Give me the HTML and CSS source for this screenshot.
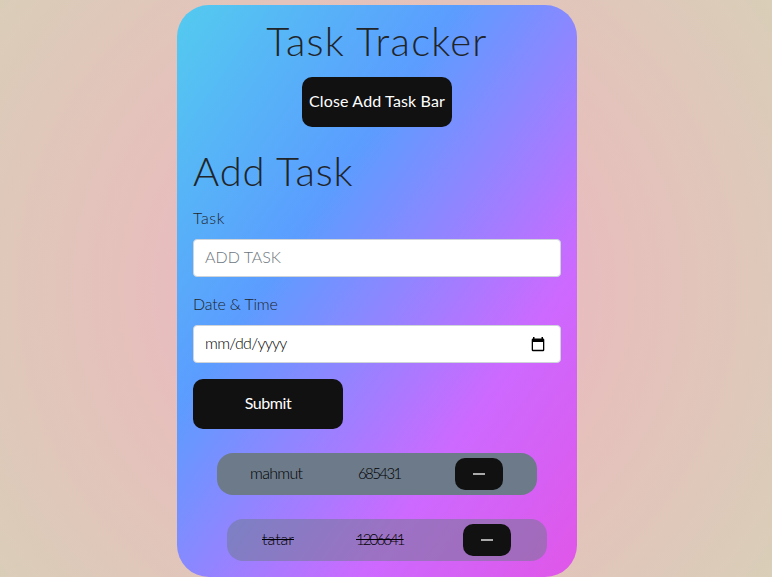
FILE: index.html
```html
<!DOCTYPE html>
<html lang="en">
<head>
<meta charset="utf-8">
<title>Task Tracker</title>
<link rel="stylesheet" href="styles.css">
</head>
<body>
<main class="card">
  <h1 class="title"><span class="hand hand-title">Task Tracker</span></h1>
  <button class="btn toggle"><span class="hand hand-toggle">Close Add Task Bar</span></button>
  <form class="form">
    <h1 class="heading"><span class="hand hand-heading">Add Task</span></h1>
    <label class="label"><span class="hand hand-task">Task</span></label>
    <div class="field placeholder"><span class="hand hand-placeholder">ADD TASK</span></div>
    <label class="label"><span class="hand hand-date">Date &amp; Time</span></label>
    <div class="field"><span class="hand hand-format">mm/dd/yyyy</span>
      <svg class="calendar" width="14" height="15" viewBox="0 0 14 15"><path fill="#000" fill-rule="evenodd" d="M2 0h1.5v1.5h7V0H12v1.5q1.3 0 1.3 1.2v10.2q0 1.3-1.3 1.3H2Q.7 14.200.7 12.900V2.700Q.7 1.500 2 1.500zM2 5v7.800h10V5z"/></svg>
    </div>
    <button class="btn submit" type="button"><span class="hand hand-submit">Submit</span></button>
  </form>
  <div class="task">
    <span class="name"><span class="hand hand-name">mahmut</span></span>
    <span class="number"><span class="hand hand-number">685431</span></span>
    <button class="remove"><i class="minus"></i></button>
  </div>
  <div class="task done">
    <span class="name"><span class="hand">tatar</span></span>
    <span class="number"><span class="hand hand-number">1206641</span></span>
    <button class="remove"><i class="minus"></i></button>
  </div>
</main>
</body>
</html>
```
FILE: styles.css
```css
* { box-sizing: border-box; }
html { height: 577px; overflow: hidden; background: radial-gradient(circle at 377px 288px, #eeaeca 0%, #e6c0bc 50%, #d9ceb8 100%); }
body { margin: 0; padding: 5px 0 0 177px; font: 300 16px/24px Lato, "Open Sans", sans-serif; color: #212529; }
.card { width: 400px; height: 572px; padding: 12px 16px 0; border-radius: 32px; background: linear-gradient(to bottom right, #53cbef 0%, #5b9dff 35%, #cd69ff 73%, #e056e8 100%); }
.hand { display: inline-block; white-space: nowrap; }
.title, .heading { margin: 0; font-weight: 300; font-size: 40px; line-height: 48px; }
.title { text-align: center; }
.heading { margin: 19px 0 11px; }
.hand-title { letter-spacing: 1.25px; }
.hand-heading { letter-spacing: 0.9px; }
.hand-toggle { letter-spacing: 0.15px; }
.hand-task { letter-spacing: 0.6px; }
.hand-date { letter-spacing: -0.2px; }
.hand-format { letter-spacing: -0.7px; color: #000; }
.hand-submit { letter-spacing: -0.4px; }
.hand-name { letter-spacing: -0.7px; }
.hand-number { font-size: 15px; letter-spacing: -1.6px; }
.btn { display: block; width: 150px; height: 50px; padding: 0 0 2px; border: 0; border-radius: 10px; background: #111; color: #fff; font: 400 16px/24px Lato, sans-serif; }
.toggle { margin: 12px auto 0; }
.label { display: block; margin-bottom: 9px; height: 24px; }
.form { height: 322px; padding-top: 1px; }
.field { display: flex; align-items: center; justify-content: space-between; height: 38px; margin-bottom: 15px; padding: 0 15px 0 11px; border: 1px solid #ced4da; border-radius: 4px; background: #fff; }
.field .hand { padding-bottom: 2px; }
.submit { margin-top: 16px; }
.placeholder { color: #6c757d; }
.task { display: flex; align-items: center; width: 320px; height: 42px; margin: 4px 0 0 24px; border-radius: 16px; background: #6c7a89; color: #000; }
.name, .number { padding-bottom: 2px; white-space: nowrap; }
.name { width: 102px; padding-left: 33px; }
.number { width: 136px; padding-left: 39px; }
.remove { display: flex; align-items: center; justify-content: center; width: 48px; height: 32px; padding: 0; border: 0; border-radius: 10px; background: #111; }
.minus { width: 12px; height: 2px; background: #aaa; }
.done { margin: 24px 0 0 34px; background: rgba(108, 122, 137, 0.5); }
.done .hand { text-decoration: line-through; }
.done .name { width: 100px; padding-left: 35px; }
.done .number { padding-left: 29px; }
.done .hand-number { letter-spacing: -1.9px; }
```
